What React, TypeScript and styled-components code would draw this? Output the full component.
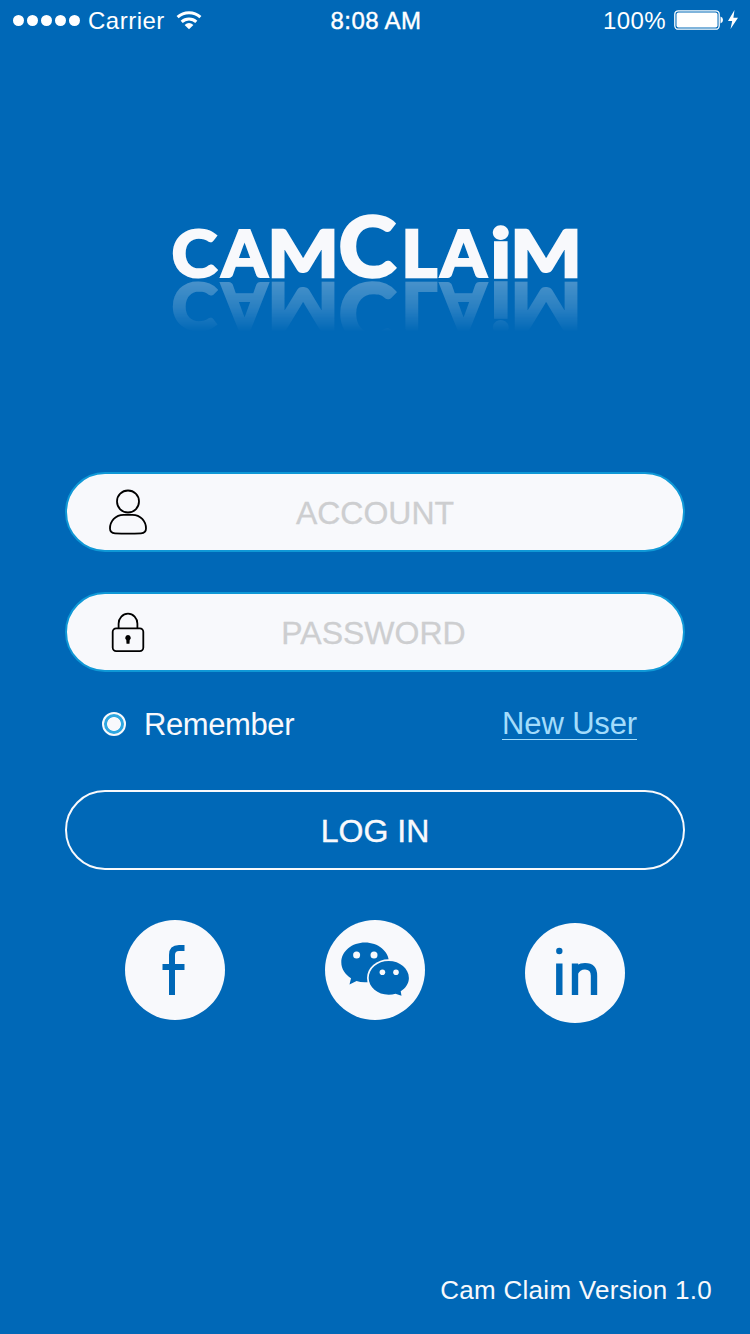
import React from 'react';
import styled, { createGlobalStyle } from 'styled-components';

const BLUE = '#0068b7';
const PAPER = '#f8f9fc';

const GlobalStyle = createGlobalStyle`
  * { box-sizing: border-box; }
  html, body { margin: 0; padding: 0; background: ${BLUE}; }
  svg { display: block; flex: none; }
`;

const Screen = styled.main`
  width: 750px;
  height: 1334px;
  overflow: hidden;
  display: flex;
  flex-direction: column;
  background: ${BLUE};
  color: ${PAPER};
  font-family: 'Liberation Sans', Arial, sans-serif;
`;

const StatusBar = styled.header`
  height: 40px;
  padding: 0 11px 0 13px;
  display: grid;
  grid-template-columns: 1fr auto 1fr;
  align-items: center;
  color: #fff;
  font-size: 24px;
  line-height: 38px;
`;

const StatusGroup = styled.div<{ $end?: boolean }>`
  display: flex;
  align-items: center;
  justify-content: ${p => (p.$end ? 'flex-end' : 'flex-start')};
`;

const SignalDots = styled.div`
  display: flex;
  gap: 3px;
  margin-right: 8px;
`;

const Dot = styled.i`
  width: 11px;
  height: 11px;
  border-radius: 50%;
  background: #fff;
`;

const StatusText = styled.span<{ $gap?: number; $spacing?: number }>`
  padding-top: 2px;
  margin-right: ${p => p.$gap ?? 0}px;
  letter-spacing: ${p => p.$spacing ?? 0}px;
`;

const Clock = styled.time`
  padding-top: 2px;
  letter-spacing: 0.4px;
  -webkit-text-stroke: 0.4px #fff;
`;

const LogoArea = styled.div`
  height: 432px;
  padding: 150px 0 0 165px;
`;

const Wordmark = styled.svg`
  font-family: Lato, sans-serif;
  font-weight: 900;
  fill: ${PAPER};
  stroke: ${PAPER};
  stroke-linejoin: miter;
  -webkit-box-reflect: below -52px
    linear-gradient(to bottom, transparent 33%, rgba(255, 255, 255, 0.17) 54%, rgba(255, 255, 255, 0.29) 76%);
`;

const Form = styled.form`
  width: 620px;
  margin: 0 auto;
  display: flex;
  flex-direction: column;
`;

const Field = styled.label`
  height: 80px;
  margin-bottom: 40px;
  border: 2px solid #0f98d6;
  border-radius: 40px;
  background: ${PAPER};
  display: grid;
  grid-template-columns: 122px 1fr 122px;
  align-items: center;
  justify-items: center;
`;

const Placeholder = styled.span<{ $shift: number }>`
  color: #cdced0;
  font-size: 32px;
  line-height: 36px;
  padding-top: 2px;
  margin-left: ${p => p.$shift}px;
  -webkit-text-stroke: 0.3px #cdced0;
`;

const Options = styled.div`
  height: 80px;
  margin-top: -2px;
  padding: 0 48px 0 37px;
  display: flex;
  justify-content: space-between;
  align-items: flex-start;
  font-size: 31px;
`;

const Remember = styled.label`
  display: flex;
  align-items: center;
  gap: 18px;
  height: 28px;
  line-height: 38px;
  letter-spacing: -0.4px;
`;

const RememberText = styled.span`
  padding-top: 2px;
`;

const Radio = styled.span`
  width: 24px;
  height: 24px;
  border: 2px solid ${PAPER};
  border-radius: 50%;
  background: radial-gradient(circle, ${PAPER} 6.5px, #2ea7e0 7.3px);
`;

const NewUser = styled.a`
  color: #a3dcfb;
  height: 30px;
  line-height: 28px;
  border-bottom: 1px solid #a3dcfb;
  letter-spacing: -0.15px;
`;

const LoginButton = styled.button`
  height: 80px;
  padding: 2px 0 0;
  border: 2px solid ${PAPER};
  border-radius: 40px;
  background: transparent;
  color: ${PAPER};
  font: 32px 'Liberation Sans', Arial, sans-serif;
  -webkit-text-stroke: 0.4px ${PAPER};
`;

const Socials = styled.nav`
  width: 500px;
  margin: 50px auto 0;
  display: flex;
  justify-content: space-between;
`;

const SocialLink = styled.a<{ $drop?: number }>`
  width: 100px;
  height: 100px;
  margin-top: ${p => p.$drop ?? 0}px;
  border-radius: 50%;
  background: ${PAPER};
  overflow: hidden;
`;

const Version = styled.footer`
  margin-top: auto;
  padding: 0 38px 29px 0;
  text-align: right;
  font-size: 26px;
  line-height: 30px;
  letter-spacing: 0.28px;
`;

type Letter = { ch: string; x: number; size: number; stretch: number; stroke: number };

/* Left edge, size, horizontal stretch and extra weight of each letter */
const LETTERS: Letter[] = [
  { ch: 'C', x: 6.5, size: 65, stretch: 1.07, stroke: 2 },
  { ch: 'A', x: 56.5, size: 65, stretch: 1.01, stroke: 2 },
  { ch: 'M', x: 102.5, size: 65, stretch: 1.15, stroke: 2.4 },
  { ch: 'C', x: 173.5, size: 83, stretch: 1.05, stroke: 2.4 },
  { ch: 'L', x: 236.5, size: 65, stretch: 1.05, stroke: 2.4 },
  { ch: 'A', x: 275.5, size: 65, stretch: 1.01, stroke: 2 },
  { ch: 'i', x: 326.5, size: 66, stretch: 1.08, stroke: 3.4 },
  { ch: 'M', x: 345.5, size: 65, stretch: 1.15, stroke: 2.4 },
];

const Logo = () => (
  <Wordmark width="420" height="116" viewBox="0 -20 420 116">
    {LETTERS.map(({ ch, x, size, stretch, stroke }, i) => (
      <text
        key={i}
        transform={`translate(${x} 67) scale(${stretch} 1)`}
        fontSize={size}
        strokeWidth={stroke}
      >
        {ch}
      </text>
    ))}
  </Wordmark>
);

const WifiIcon = () => (
  <svg width="26" height="20" viewBox="0 0 26 20" fill="none" stroke="#fff" strokeWidth="3">
    <path d="M1.6 7.2a16.5 16.5 0 0 1 22.8 0" />
    <path d="M5.7 11.8a10.6 10.6 0 0 1 14.6 0" />
    <path d="M13 19.2 8.6 14.9q4.4-3.6 8.8 0Z" fill="#fff" stroke="none" />
  </svg>
);

const BatteryIcon = () => (
  <svg width="65" height="22" viewBox="0 0 65 22" fill="#fff">
    <rect x="0.8" y="1.8" width="44.4" height="18.4" rx="3.5" fill="none" stroke="#fff" strokeWidth="1.3" />
    <rect x="2.5" y="3.5" width="41" height="15" rx="2" />
    <path d="M46.5 7.5q2.5.8 2.5 3.5t-2.5 3.5Z" />
    <path d="M60.5 1 54 12h4.2l-1.7 8L64 8.7h-4.6Z" />
  </svg>
);

const UserIcon = () => (
  <svg width="40" height="46" viewBox="0 0 40 46" fill="none" stroke="#000" strokeWidth="1.8">
    <circle cx="20" cy="12.5" r="11" />
    <path d="M15.5 25.8h9c8 0 13.5 6.5 13.5 13.7 0 3.3-1.6 4.6-5 4.8-8.5.4-17.5.4-26 0-3.4-.2-5-1.5-5-4.8 0-7.2 5.5-13.7 13.5-13.7Z" />
  </svg>
);

const LockIcon = () => (
  <svg width="34" height="40" viewBox="0 0 34 40" fill="none" stroke="#000" strokeWidth="1.8">
    <rect x="1.7" y="16.3" width="30.6" height="22.8" rx="3.5" />
    <path d="M7.6 16.3v-4.6a9.4 10 0 0 1 18.8 0v4.6" />
    <path d="M17 23a2.8 2.8 0 0 0-1.7 5l.2 3.7h3l.2-3.7A2.8 2.8 0 0 0 17 23Z" fill="#000" stroke="none" />
  </svg>
);

const FacebookIcon = () => (
  <svg width="100" height="100" fill="none" stroke={BLUE} strokeWidth="6">
    <path d="M47 75V35q0-7 7-7h5.5M37.5 47h22" />
  </svg>
);

const WechatIcon = () => (
  <svg width="100" height="100" fill={BLUE}>
    <path d="M40 22.5c13 0 24 8.7 24 19.8S53 62.3 40 62.3q-5 0-8.5-1.2L24.5 64.5l1.5-6.2C20 54.5 16.3 49 16.3 42.3 16.3 31.2 27 22.5 40 22.5Z" />
    <ellipse cx="63.7" cy="58" rx="21.7" ry="18.7" fill={PAPER} />
    <path d="M63.7 41c11.2 0 20.2 7.6 20.2 17 0 5.5-3.3 10.2-8.2 13.3l.8 4.5-6-2.1q-3 1-6.8 1c-11.2 0-20-7.5-20-16.7s8.8-17 20-17Z" />
    <g fill={PAPER}>
      <circle cx="31.6" cy="35" r="3.5" />
      <circle cx="49" cy="35" r="3.5" />
      <circle cx="57.4" cy="52.3" r="2.8" />
      <circle cx="71" cy="52.3" r="2.8" />
    </g>
  </svg>
);

const LinkedinIcon = () => (
  <svg width="100" height="100" fill="none" stroke={BLUE} strokeWidth="6.4">
    <circle cx="34.3" cy="28" r="3.2" fill={BLUE} stroke="none" />
    <path d="M34.3 40.5V72M50 40.5V72M50 50q2.5-6.8 10-6.8 9 0 9 9.500V72" />
  </svg>
);

export default function App() {
  return (
    <Screen>
      <GlobalStyle />
      <StatusBar>
        <StatusGroup>
          <SignalDots>
            {[0, 1, 2, 3, 4].map(n => (
              <Dot key={n} />
            ))}
          </SignalDots>
          <StatusText $gap={11} $spacing={0.5}>Carrier</StatusText>
          <WifiIcon />
        </StatusGroup>
        <Clock>8:08 AM</Clock>
        <StatusGroup $end>
          <StatusText $gap={8} $spacing={0.4}>100%</StatusText>
          <BatteryIcon />
        </StatusGroup>
      </StatusBar>
      <LogoArea>
        <Logo />
      </LogoArea>
      <Form>
        <Field>
          <UserIcon />
          <Placeholder $shift={0}>ACCOUNT</Placeholder>
        </Field>
        <Field>
          <LockIcon />
          <Placeholder $shift={-3}>PASSWORD</Placeholder>
        </Field>
        <Options>
          <Remember>
            <Radio />
            <RememberText>Remember</RememberText>
          </Remember>
          <NewUser>New User</NewUser>
        </Options>
        <LoginButton type="button">LOG IN</LoginButton>
      </Form>
      <Socials>
        <SocialLink>
          <FacebookIcon />
        </SocialLink>
        <SocialLink>
          <WechatIcon />
        </SocialLink>
        <SocialLink $drop={3}>
          <LinkedinIcon />
        </SocialLink>
      </Socials>
      <Version>Cam Claim Version 1.0</Version>
    </Screen>
  );
}
